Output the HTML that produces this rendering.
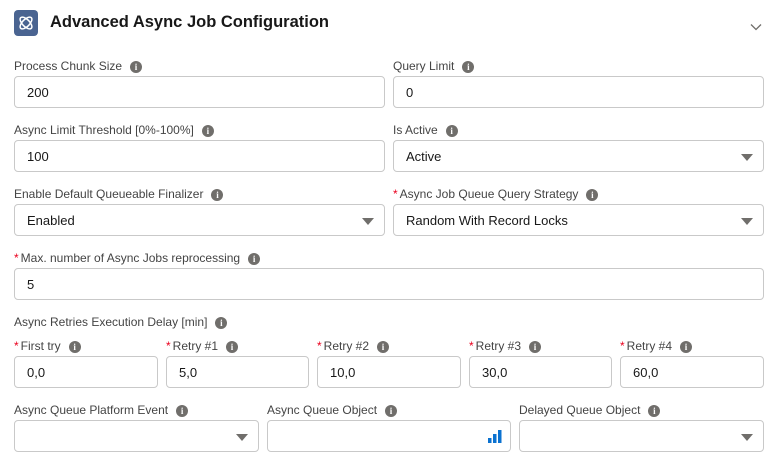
<!DOCTYPE html>
<html><head><style>
*{box-sizing:border-box;margin:0;padding:0}
body{width:779px;height:466px;background:#fff;font-family:"Liberation Sans",sans-serif;color:#181818;position:relative;overflow:hidden}
.l{position:absolute;font-size:12px;color:#444;white-space:nowrap;line-height:14px}
.l i{display:inline-block;width:12px;height:12px;border-radius:50%;background:#706e6b;color:#fff;font-style:normal;font-size:9px;font-weight:bold;text-align:center;line-height:12px;margin-left:8px;vertical-align:0px;font-family:"Liberation Serif",serif}
.l b{color:#ea001e;font-weight:normal;margin-right:2px}
.f{position:absolute;height:32px;border:1px solid #c9c9c9;border-radius:4px;font-size:13px;color:#181818;padding-left:12px;line-height:31px}
.dd:after{content:"";position:absolute;right:10px;top:13px;border-left:6px solid transparent;border-right:6px solid transparent;border-top:7px solid #706e6b}
</style></head><body>
<div style="position:absolute;left:14px;top:10px;width:24px;height:26px;background:#4a6491;border-radius:4px">
<svg width="24" height="26" viewBox="0 0 24 26"><g fill="none" stroke="#fff" stroke-width="1.5"><ellipse cx="12" cy="13" rx="7.5" ry="3.6" transform="rotate(45 12 13)"/><ellipse cx="12" cy="13" rx="7.5" ry="3.6" transform="rotate(-45 12 13)"/></g></svg></div>
<div style="position:absolute;left:50px;top:13px;font-size:16.5px;font-weight:bold;color:#181818">Advanced Async Job Configuration</div>
<svg style="position:absolute;left:750px;top:23px" width="12" height="8" viewBox="0 0 12 8"><path d="M1 1.5L6 6.5L11 1.5" fill="none" stroke="#706e6b" stroke-width="1.3"/></svg>

<div class="l" style="left:14px;top:59px">Process Chunk Size<i>i</i></div>
<div class="f" style="left:14px;top:76px;width:371px">200</div>
<div class="l" style="left:393px;top:59px">Query Limit<i>i</i></div>
<div class="f" style="left:393px;top:76px;width:371px">0</div>

<div class="l" style="left:14px;top:123px">Async Limit Threshold [0%-100%]<i>i</i></div>
<div class="f" style="left:14px;top:140px;width:371px">100</div>
<div class="l" style="left:393px;top:123px">Is Active<i>i</i></div>
<div class="f dd" style="left:393px;top:140px;width:371px">Active</div>

<div class="l" style="left:14px;top:187px">Enable Default Queueable Finalizer<i>i</i></div>
<div class="f dd" style="left:14px;top:204px;width:371px">Enabled</div>
<div class="l" style="left:393px;top:187px"><b>*</b>Async Job Queue Query Strategy<i>i</i></div>
<div class="f dd" style="left:393px;top:204px;width:371px">Random With Record Locks</div>

<div class="l" style="left:14px;top:251px"><b>*</b>Max. number of Async Jobs reprocessing<i>i</i></div>
<div class="f" style="left:14px;top:268px;width:750px">5</div>

<div class="l" style="left:14px;top:315px">Async Retries Execution Delay [min]<i>i</i></div>
<div class="l" style="left:14px;top:339px"><b>*</b>First try<i>i</i></div>
<div class="f" style="left:14px;top:356px;width:144px">0,0</div>
<div class="l" style="left:166px;top:339px"><b>*</b>Retry #1<i>i</i></div>
<div class="f" style="left:166px;top:356px;width:143px">5,0</div>
<div class="l" style="left:317px;top:339px"><b>*</b>Retry #2<i>i</i></div>
<div class="f" style="left:317px;top:356px;width:144px">10,0</div>
<div class="l" style="left:469px;top:339px"><b>*</b>Retry #3<i>i</i></div>
<div class="f" style="left:469px;top:356px;width:143px">30,0</div>
<div class="l" style="left:620px;top:339px"><b>*</b>Retry #4<i>i</i></div>
<div class="f" style="left:620px;top:356px;width:144px">60,0</div>

<div class="l" style="left:14px;top:403px">Async Queue Platform Event<i>i</i></div>
<div class="f dd" style="left:14px;top:420px;width:245px"></div>
<div class="l" style="left:267px;top:403px">Async Queue Object<i>i</i></div>
<div class="f" style="left:267px;top:420px;width:244px">
<svg style="position:absolute;right:8px;top:9px" width="14" height="13" viewBox="0 0 14 13"><rect x="0" y="8" width="3.5" height="5" fill="#0b72d0"/><rect x="5" y="4" width="3.5" height="9" fill="#0b72d0"/><rect x="10" y="0" width="3.5" height="13" fill="#0b72d0"/></svg></div>
<div class="l" style="left:519px;top:403px">Delayed Queue Object<i>i</i></div>
<div class="f dd" style="left:519px;top:420px;width:245px"></div>
</body></html>
